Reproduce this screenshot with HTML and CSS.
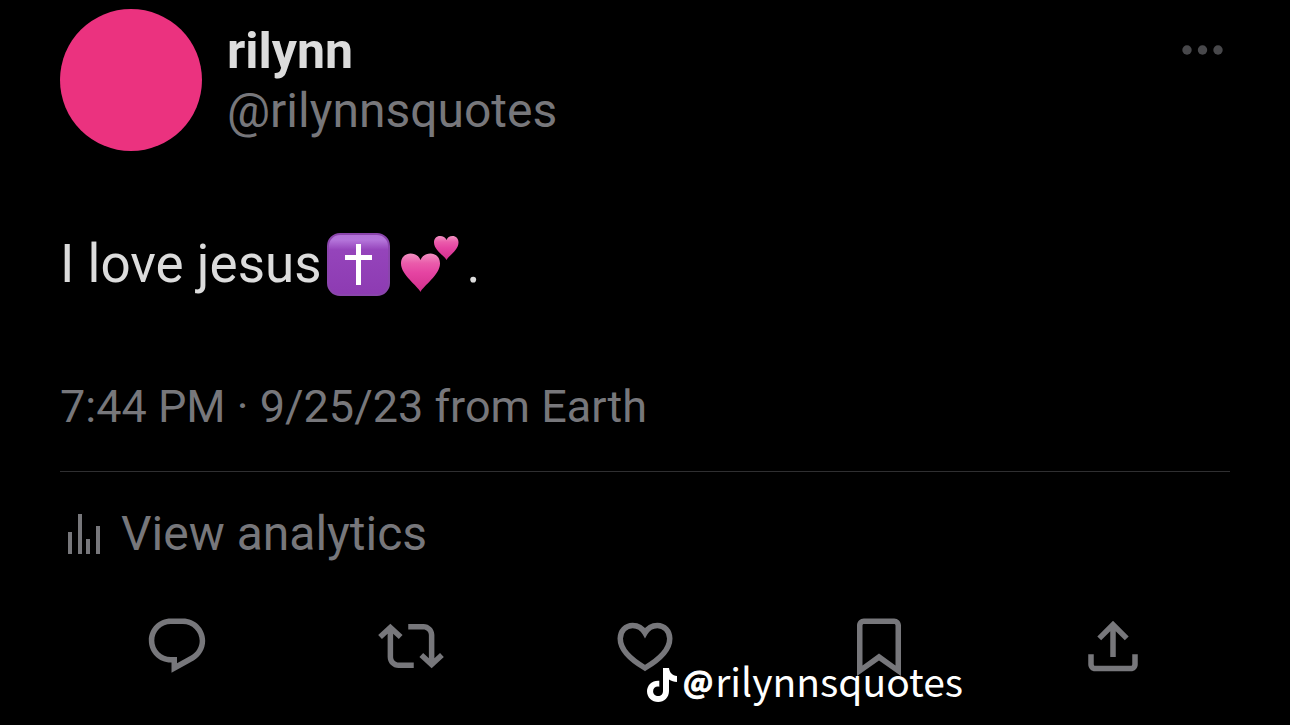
FILE: index.html
```
<!DOCTYPE html>
<html lang="en">
<head>
<meta charset="utf-8">
<meta name="viewport" content="width=device-width, initial-scale=1">
<title>rilynn (@rilynnsquotes)</title>
<link rel="stylesheet" href="styles.css">
</head>
<body>
<main class="post">
  <header class="author">
    <span class="avatar"></span>
    <div class="names">
      <h1 class="name">rilynn</h1>
      <a class="handle" href="#">@rilynnsquotes</a>
    </div>
    <button class="more" type="button" aria-label="More">
      <svg width="42" height="12" viewBox="0 0 42 12"><circle cx="5" cy="6" r="4.7"/><circle cx="20.5" cy="6" r="4.7"/><circle cx="36" cy="6" r="4.7"/></svg>
    </button>
  </header>

  <p class="text">I love jesus<svg class="emoji cross" viewBox="0 0 63 63" role="img" aria-label="Latin cross">
      <defs>
        <linearGradient id="tile" x1="0" y1="0" x2="0" y2="1"><stop offset="0" stop-color="#b273d6"/><stop offset=".1" stop-color="#b474da"/><stop offset=".26" stop-color="#9544bb"/><stop offset="1" stop-color="#8d3bb2"/></linearGradient>
      </defs>
      <rect x="1" y="1" width="61" height="61" rx="12" fill="url(#tile)" stroke="#8a45ac" stroke-width="2"/>
      <path d="M29 11h5v11h11v5H34v25h-5V27H18v-5h11z" fill="#fff"/>
    </svg><svg class="emoji hearts" viewBox="0 0 60 60" role="img" aria-label="Two hearts">
      <defs>
        <linearGradient id="pink" x1="0" y1="0" x2="0" y2="1"><stop offset="0" stop-color="#f291c2"/><stop offset=".25" stop-color="#ea5cab"/><stop offset=".5" stop-color="#e544a2"/><stop offset="1" stop-color="#d32f8c"/></linearGradient>
      </defs>
      <path d="M20.500 58C18 52 1 41 1 29.500C1 23 5.500 19.500 10.500 19.500C15.500 19.500 19 22 20.500 26C22 22 25.500 19.500 30.500 19.500C35.500 19.500 40 23 40 29.500C40 41 23 52 20.500 58Z" fill="url(#pink)"/>
      <path d="M46.500 26C45 22 34 16.500 34 8.500C34 4.500 36.500 2 40 2C43 2 45.500 3.500 46.500 6C47.500 3.500 49.500 2 52.500 2C56 2 58.500 4.500 58.500 8.500C58.500 16.500 48 22 46.500 26Z" fill="url(#pink)"/>
    </svg>.</p>

  <p class="meta"><time datetime="2023-09-25T19:44">7:44 PM · 9/25/23</time> from Earth</p>

  <a class="analytics" href="#">
    <svg width="34" height="40" viewBox="0 0 34 40"><path d="M1 18h4v22H1zM11 0h4v40h-4zM19 25h4v15h-4zM29 12h4v28h-4z"/></svg>
    <span>View analytics</span>
  </a>

  <div class="actions">
    <button type="button" aria-label="Reply"><svg viewBox="0 0 24 24"><path d="M1.751 10c0-4.420 3.584-8 8.005-8h4.366c4.490 0 8.129 3.640 8.129 8.130 0 2.960-1.607 5.680-4.196 7.110l-8.054 4.460v-3.690h-.067c-4.490.1-8.183-3.510-8.183-8.010zm8.005-6c-3.317 0-6.005 2.690-6.005 6 0 3.370 2.770 6.080 6.138 6.010l.351-.01h1.761v2.300l5.087-2.810c1.951-1.080 3.163-3.130 3.163-5.360 0-3.390-2.744-6.130-6.129-6.130H9.756z"/></svg></button>
    <button type="button" aria-label="Repost"><svg viewBox="0 0 24 24"><path d="M4.500 3.880l4.432 4.140-1.364 1.460L5.500 7.550V16c0 1.100.896 2 2 2H13v2H7.500c-2.209 0-4-1.790-4-4V7.550L1.432 9.480.068 8.020 4.500 3.880zM16.500 6H11V4h5.500c2.209 0 4 1.790 4 4v8.450l2.068-1.930 1.364 1.460-4.432 4.140-4.432-4.140 1.364-1.460 2.068 1.930V8c0-1.100-.896-2-2-2z"/></svg></button>
    <button type="button" aria-label="Like"><svg viewBox="0 0 24 24"><path class="line" d="M12 20C6.700 16.900 3 13.400 3 9.300C3 6.500 5 4.500 7.500 4.500C9.600 4.500 11.100 5.600 12 7.200C12.900 5.600 14.400 4.500 16.500 4.500C19 4.500 21 6.500 21 9.300C21 13.400 17.300 16.900 12 20Z"/></svg></button>
    <button type="button" aria-label="Bookmark"><svg viewBox="0 0 24 24"><path d="M4 4.500C4 3.120 5.119 2 6.500 2h11C18.881 2 20 3.120 20 4.500v18.440l-8-5.710-8 5.710V4.500zM6.500 4c-.276 0-.5.220-.5.500v14.560l6-4.290 6 4.290V4.500c0-.280-.224-.5-.5-.5h-11z"/></svg></button>
    <button type="button" aria-label="Share"><svg viewBox="0 0 24 24"><path d="M12 2.800l5.700 5.700-1.410 1.420L13 6.620V16h-2V6.620l-3.300 3.300L6.290 8.500 12 2.800zM21 15v3.600c0 1.400-1.120 2.600-2.500 2.600h-13C4.110 21.200 3 20 3 18.600V15h2v3.600c0 .3.220.6.500.6h13c.28 0 .5-.3.500-.6V15h2z"/></svg></button>
  </div>

  <div class="watermark">
    <svg width="30" height="34" viewBox="0 0 30 34"><path d="M16 0h6c.4 4.500 3.500 7.600 8 8v6c-3 0-5.700-.9-8-2.500V23c0 6.500-4.800 11-10.800 11C5 34 0 29.500 0 23.200 0 16.800 5.500 12 12.300 12.700v6.100C9 18 6.100 20 6.100 23.200c0 2.800 2.200 4.900 5 4.900 3 0 4.900-2.100 4.900-5.200z"/></svg>
    <span class="tag"><b>@</b>rilynnsquotes</span>
  </div>
</main>
</body>
</html>
```
FILE: styles.css
```
* {
  box-sizing: border-box;
}

body {
  margin: 0;
  background: #000;
  color: #77777b;
  font-family: Roboto, "Liberation Sans", sans-serif;
}

button {
  padding: 0;
  border: 0;
  background: none;
  color: inherit;
}

svg {
  display: block;
  fill: currentColor;
}

a {
  color: inherit;
  text-decoration: none;
}

.post {
  position: relative;
  padding: 9px 60px 44px;
}

.author {
  display: flex;
  align-items: flex-start;
  gap: 25px;
}

.avatar {
  width: 142px;
  height: 142px;
  border-radius: 50%;
  background: #eb327f;
}

.names {
  flex: 1;
  padding-top: 12px;
  font-size: 48px;
  line-height: 60px;
}

.name {
  margin: 0;
  color: #dcdcdc;
  font-size: 50px;
  font-weight: 700;
}

.handle {
  display: block;
}

.more {
  margin: 35px 6px 0 0;
  color: #48484b;
}

.text {
  display: flex;
  align-items: center;
  margin: 77px 0 0;
  color: #dcdcdc;
  font-size: 53px;
  line-height: 72px;
}

.emoji {
  flex: none;
}

.cross {
  width: 63px;
  height: 63px;
  margin: 0 10px 0 5px;
}

.hearts {
  width: 60px;
  height: 60px;
  margin-right: 7px;
}

.meta {
  margin: 77px 0 0;
  padding-bottom: 34px;
  border-bottom: 1px solid #2f2f31;
  font-size: 45px;
  line-height: 60px;
}

.analytics {
  display: flex;
  align-items: center;
  gap: 20px;
  margin-top: 32px;
  padding-left: 7px;
  font-size: 48px;
  line-height: 60px;
}

.actions {
  display: grid;
  grid-template-columns: repeat(5, 1fr);
  justify-items: center;
  margin-top: 49px;
}

.actions svg {
  width: 66px;
  height: 66px;
}

.actions .line {
  fill: none;
  stroke: currentColor;
  stroke-width: 2;
}

.watermark {
  position: absolute;
  left: 50%;
  bottom: 15px;
  display: flex;
  align-items: flex-end;
  gap: 6px;
  padding-left: 2px;
  color: #fff;
  font-family: "Noto Sans CJK SC", "Noto Sans", sans-serif;
  font-size: 39px;
  line-height: 56px;
}

.watermark svg {
  margin-bottom: 6px;
}

.tag {
  display: flex;
  align-items: center;
  gap: 2px;
}

.tag b {
  font-size: 30px;
  -webkit-text-stroke: 1px currentColor;
}
```
